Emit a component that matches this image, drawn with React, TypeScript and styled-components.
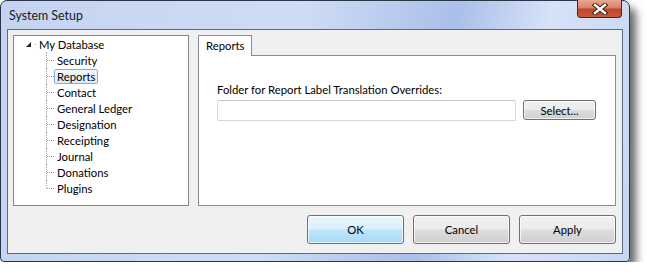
import React, { ReactElement } from 'react';
import styled, { createGlobalStyle, css } from 'styled-components';

const GlobalStyle = createGlobalStyle`
  html, body {
    margin: 0;
    padding: 0;
    background: #ffffff;
  }
  body {
    font-family: Lato, 'Noto Sans', sans-serif;
    font-size: 11.3px;
    color: #000000;
  }
`;

const Window = styled.div`
  width: 630px;
  height: 262px;
  box-sizing: border-box;
  display: flex;
  flex-direction: column;
  border: 1px solid #2b3648;
  border-radius: 7px 7px 4px 4px;
  background: linear-gradient(100deg, #c4d3f0 0%, #cfdcf5 45%, #aabfe9 68%, #d6e2f8 82%, #c8d6f2 100%);
  box-shadow: 7px 7px 8px -1px rgba(0, 0, 0, 0.6);
  padding: 0 6px 7px 6px;
`;

const TitleBar = styled.div`
  height: 28px;
  display: flex;
  align-items: flex-start;
  justify-content: space-between;
`;

const Title = styled.div`
  padding: 7px 0 0 2px;
  font-size: 12.4px;
  line-height: 16px;
  color: #1a1a1a;
`;

const CloseButton = styled.div`
  width: 45px;
  height: 18px;
  margin-top: -1px;
  margin-right: 1px;
  box-sizing: border-box;
  border: 1px solid #4a2218;
  border-top: none;
  border-radius: 0 0 4px 4px;
  background: linear-gradient(180deg, #e8a892 0%, #d88466 45%, #c0462a 55%, #c85a3a 100%);
  display: flex;
  align-items: center;
  justify-content: center;
`;

const Client = styled.div`
  flex: 1;
  border: 1px solid #5d6b82;
  background: #f0f0f0;
  padding: 5px 6px 8px 5px;
  display: flex;
  flex-direction: column;
  gap: 9px;
`;

const TopRow = styled.div`
  display: flex;
  gap: 9px;
  height: 171px;
`;

const TreeBox = styled.div`
  width: 176px;
  box-sizing: border-box;
  border: 1px solid #828790;
  background: #ffffff;
  padding: 0;
`;

const TreeRoot = styled.div`
  height: 16px;
  display: flex;
  align-items: center;
  padding-left: 12px;
`;

const Expander = styled.div`
  width: 0;
  height: 0;
  border-left: 5px solid transparent;
  border-bottom: 5px solid #262626;
  margin-right: 4px;
  margin-top: 1px;
`;

const RootDot = styled.span`
  width: 1px;
  height: 1px;
  background: #a0a0a0;
  margin-right: 3px;
`;

const TreeChildren = styled.div`
  padding-left: 32px;
`;

const TreeItem = styled.div<{ $last?: boolean }>`
  position: relative;
  height: 16px;
  display: flex;
  align-items: center;
  padding-left: 8px;

  &::before {
    content: '';
    position: absolute;
    left: 0;
    top: 0;
    height: ${p => p.$last ? '8px' : '16px'};
    border-left: 1px dotted #a0a0a0;
  }

  &::after {
    content: '';
    position: absolute;
    left: 1px;
    top: 8px;
    width: 7px;
    border-top: 1px dotted #a0a0a0;
  }
`;

const ItemLabel = styled.span<{ $selected?: boolean }>`
  padding: 0 2px 0 2px;
  height: 15px;
  line-height: 14px;
  box-sizing: border-box;
  border: 1px solid transparent;
  border-radius: 2px;
  ${p => p.$selected && css`
    border-color: #84acdd;
    background: linear-gradient(180deg, #f2f8fe 0%, #dbeafb 100%);
  `}
`;

const TabArea = styled.div`
  flex: 1;
  display: flex;
  flex-direction: column;
`;

const TabStrip = styled.div`
  height: 20px;
  display: flex;
  align-items: flex-end;
`;

const Tab = styled.div`
  width: 54px;
  height: 21px;
  box-sizing: border-box;
  border: 1px solid #898c95;
  border-bottom: none;
  background: #ffffff;
  padding: 2px 0 0 7px;
  line-height: 16px;
  margin-bottom: -1px;
  position: relative;
  z-index: 1;
`;

const TabPage = styled.div`
  flex: 1;
  border: 1px solid #898c95;
  background: #ffffff;
  padding: 26px 18px 0 18px;
`;

const FieldLabel = styled.div`
  line-height: 16px;
  margin-bottom: 2px;
`;

const FieldRow = styled.div`
  display: flex;
  gap: 7px;
`;

const TextInput = styled.div`
  width: 299px;
  height: 21px;
  box-sizing: border-box;
  border: 1px solid #d3d6dc;
  border-top-color: #c4c7cd;
  border-radius: 2px;
  background: #ffffff;
`;

const Button = styled.div<{ $default?: boolean }>`
  box-sizing: border-box;
  display: flex;
  align-items: center;
  justify-content: center;
  border: 1px solid #707070;
  border-radius: 3px;
  background: linear-gradient(180deg, #f2f2f2 0%, #ebebeb 48%, #dddddd 52%, #cfcfcf 100%);
  box-shadow: inset 0 0 0 1px rgba(255, 255, 255, 0.7);
  color: #000000;
  ${p => p.$default && css`
    border-color: #3c7fb1;
    background: linear-gradient(180deg, #eaf6fd 0%, #d9f0fc 48%, #bee6fd 52%, #a7d9f5 100%);
  `}
`;

const SmallButton = styled(Button)`
  width: 73px;
  height: 20px;
`;

const DialogButton = styled(Button)`
  width: 97px;
  height: 29px;
`;

const ButtonRow = styled.div`
  display: flex;
  justify-content: flex-end;
  gap: 9px;
`;

const CloseGlyph = (): ReactElement => (
  <svg width="16" height="12" viewBox="0 0 16 12">
    <path d="M3 2 L13 10 M13 2 L3 10" stroke="#3a1a12" strokeWidth="4.4" strokeLinecap="square" />
    <path d="M3 2 L13 10 M13 2 L3 10" stroke="#ffffff" strokeWidth="2.4" strokeLinecap="square" />
  </svg>
);

const children = ['Security', 'Reports', 'Contact', 'General Ledger', 'Designation', 'Receipting', 'Journal', 'Donations', 'Plugins'];

const App = (): ReactElement => {
  return (
    <>
      <GlobalStyle />
      <Window>
        <TitleBar>
          <Title>System Setup</Title>
          <CloseButton>
            <CloseGlyph />
          </CloseButton>
        </TitleBar>
        <Client>
          <TopRow>
            <TreeBox>
              <TreeRoot>
                <Expander />
                <RootDot />
                <span>My Database</span>
              </TreeRoot>
              <TreeChildren>
                {children.map((name, i) => (
                  <TreeItem key={name} $last={i === children.length - 1}>
                    <ItemLabel $selected={name === 'Reports'}>{name}</ItemLabel>
                  </TreeItem>
                ))}
              </TreeChildren>
            </TreeBox>
            <TabArea>
              <TabStrip>
                <Tab>Reports</Tab>
              </TabStrip>
              <TabPage>
                <FieldLabel>Folder for Report Label Translation Overrides:</FieldLabel>
                <FieldRow>
                  <TextInput />
                  <SmallButton>Select...</SmallButton>
                </FieldRow>
              </TabPage>
            </TabArea>
          </TopRow>
          <ButtonRow>
            <DialogButton $default>OK</DialogButton>
            <DialogButton>Cancel</DialogButton>
            <DialogButton>Apply</DialogButton>
          </ButtonRow>
        </Client>
      </Window>
    </>
  );
}

export default App;
